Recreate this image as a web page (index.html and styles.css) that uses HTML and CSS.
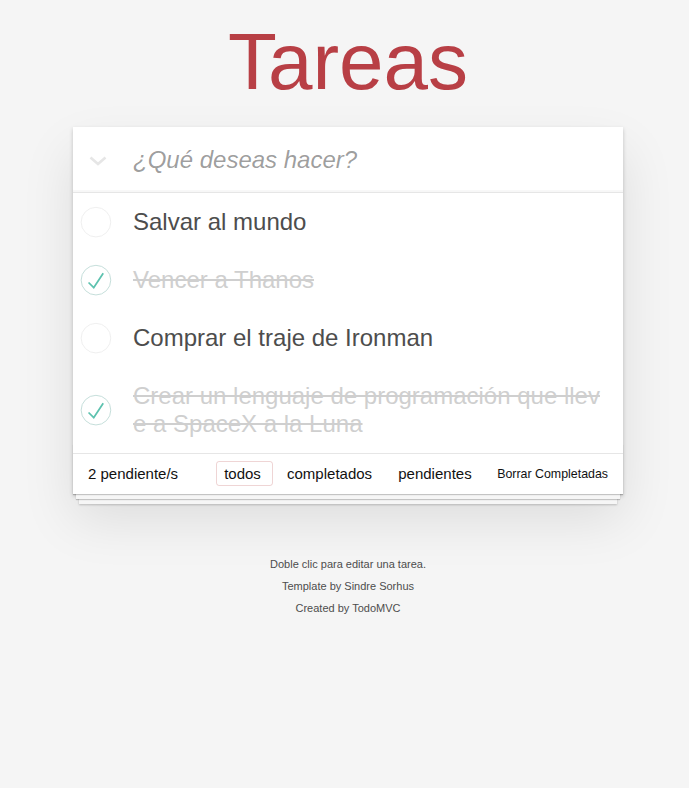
FILE: index.html
```html
<!DOCTYPE html>
<html lang="es">
<head>
<meta charset="utf-8">
<title>Tareas</title>
<link rel="stylesheet" href="styles.css">
</head>
<body>
<div class="page">
  <h1 class="title">Tareas</h1>
  <section class="todoapp">
    <header class="header">
      <span class="toggle-all">
        <svg width="18" height="10" viewBox="0 0 18 10"><polyline points="1.5,1.5 9,8 16.5,1.5" fill="none" stroke="#e6e6e6" stroke-width="2.6"/></svg>
      </span>
      <input class="new-todo" placeholder="¿Qué deseas hacer?">
    </header>
    <ul class="todo-list">
      <li class="todo">
        <span class="check"><svg width="40" height="40" viewBox="-10 -18 100 135"><circle cx="50" cy="50" r="50" fill="none" stroke="#ededed" stroke-width="3"/></svg></span>
        <label class="todo-label">Salvar al mundo</label>
      </li>
      <li class="todo completed">
        <span class="check"><svg width="40" height="40" viewBox="-10 -18 100 135"><circle cx="50" cy="50" r="50" fill="none" stroke="#bddad5" stroke-width="3"/><path fill="#5dc2af" d="M72 25L42 71 27 56l-4 4 20 20 34-52z"/></svg></span>
        <label class="todo-label">Vencer a Thanos</label>
      </li>
      <li class="todo">
        <span class="check"><svg width="40" height="40" viewBox="-10 -18 100 135"><circle cx="50" cy="50" r="50" fill="none" stroke="#ededed" stroke-width="3"/></svg></span>
        <label class="todo-label">Comprar el traje de Ironman</label>
      </li>
      <li class="todo completed">
        <span class="check"><svg width="40" height="40" viewBox="-10 -18 100 135"><circle cx="50" cy="50" r="50" fill="none" stroke="#bddad5" stroke-width="3"/><path fill="#5dc2af" d="M72 25L42 71 27 56l-4 4 20 20 34-52z"/></svg></span>
        <label class="todo-label">Crear un lenguaje de programación que lleve a SpaceX a la Luna</label>
      </li>
    </ul>
    <footer class="footer">
      <span class="todo-count">2 pendiente/s</span>
      <ul class="filters"><li><a class="filter selected">todos&nbsp;</a></li><li><a class="filter">completados&nbsp;</a></li><li><a class="filter">pendientes&nbsp;</a></li></ul>
      <button class="clear-completed">Borrar Completadas</button>
    </footer>
  </section>
  <footer class="info">
    <p>Doble clic para editar una tarea.</p>
    <p>Template by Sindre Sorhus</p>
    <p>Created by TodoMVC</p>
  </footer>
</div>
</body>
</html>
```
FILE: styles.css
```css
html, body {
  margin: 0;
  padding: 0;
}
body {
  background: #f5f5f5;
  font-family: "Liberation Sans", Arial, sans-serif;
  font-size: 14px;
  line-height: 1.4em;
  color: #111;
}
.page {
  width: 550px;
  margin: 0 auto;
  padding-left: 7px;
  padding-top: 22px;
}
.title {
  margin: 0 0 25px;
  font-size: 80px;
  line-height: 80px;
  font-weight: 400;
  text-align: center;
  color: #b83f45;
}
.todoapp {
  position: relative;
  background: #fff;
  box-shadow: 0 2px 4px 0 rgba(0,0,0,0.2), 0 25px 50px 0 rgba(0,0,0,0.1);
}
.header {
  display: flex;
  align-items: center;
  height: 65px;
  box-shadow: inset 0 -2px 1px rgba(0,0,0,0.03);
  border-bottom: 1px solid #e6e6e6;
}
.toggle-all {
  width: 60px;
  display: flex;
  justify-content: flex-start;
  padding-left: 16px;
  box-sizing: border-box;
  padding-top: 2px;
}
.new-todo {
  flex: 1;
  border: none;
  outline: none;
  background: transparent;
  font-family: inherit;
  font-size: 24px;
  padding: 0 16px 0 0;
  color: #4d4d4d;
}
.new-todo::placeholder {
  font-style: italic;
  color: rgba(0,0,0,0.4);
}
.todo-list {
  margin: 0;
  padding: 0;
  list-style: none;
}
.todo {
  display: flex;
  align-items: center;
  font-size: 24px;
}
.check {
  width: 60px;
  flex: none;
  display: flex;
  align-items: center;
}
.check svg {
  display: block;
}
.todo-label {
  flex: 1;
  padding: 15px 15px 15px 0;
  line-height: 28px;
  color: #4d4d4d;
  word-break: break-all;
}
.completed .todo-label {
  color: #cfcfcf;
  text-decoration: line-through;
}
.footer {
  position: relative;
  display: flex;
  align-items: center;
  justify-content: space-between;
  padding: 10px 15px;
  height: 20px;
  font-size: 15px;
  color: #111;
  border-top: 1px solid #e6e6e6;
}
.footer::before {
  content: "";
  position: absolute;
  right: 0;
  bottom: 0;
  left: 0;
  height: 50px;
  overflow: hidden;
  box-shadow: 0 1px 1px rgba(0,0,0,0.2), 0 8px 0 -3px #f6f6f6, 0 9px 1px -3px rgba(0,0,0,0.2), 0 16px 0 -6px #f6f6f6, 0 17px 2px -6px rgba(0,0,0,0.2);
}
.todo-count {
  position: relative;
}
.filters {
  position: absolute;
  left: 0;
  right: 0;
  margin: 0;
  padding: 0 0 0 4px;
  list-style: none;
  text-align: center;
}
.filters li {
  display: inline;
}
.filter {
  margin: 3px;
  padding: 3px 7px;
  border: 1px solid transparent;
  border-radius: 3px;
  color: inherit;
}
.filter.selected {
  border-color: rgba(175,47,47,0.2);
}
.clear-completed {
  position: relative;
  border: none;
  background: none;
  padding: 0;
  margin: 0;
  font-family: "Liberation Sans", Arial, sans-serif;
  font-size: 12.4px;
  color: #111;
}
.info {
  margin: 65px auto 0;
  color: #4d4d4d;
  font-size: 11px;
  text-align: center;
}
.info p {
  margin: 11px 0;
  line-height: 1;
}
```
